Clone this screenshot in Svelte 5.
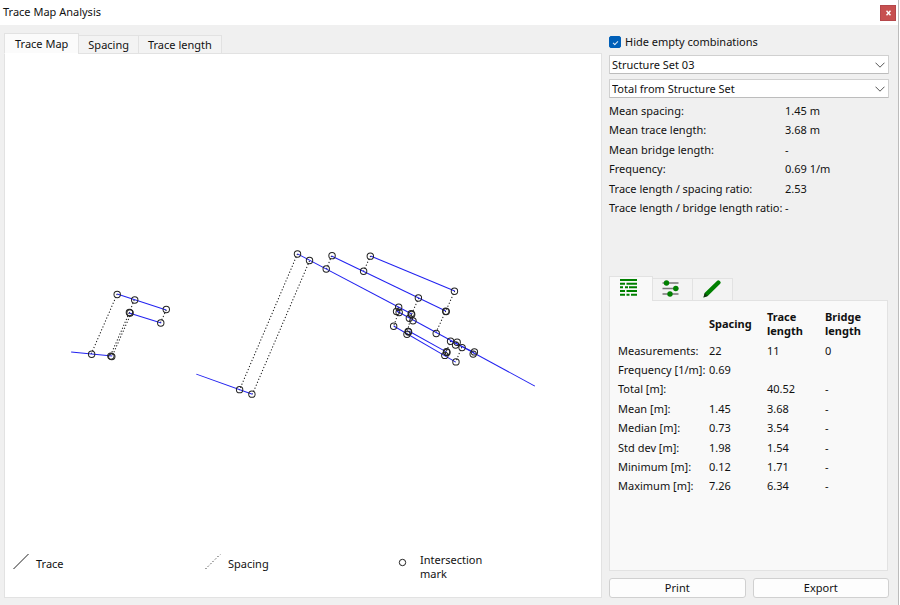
<script>
  const tabs = ['Trace Map', 'Spacing', 'Trace length'];
  let activeTab = $state('Trace Map');
  let activeView = $state('table');
  let hideEmpty = $state(true);
  let structureSet = $state('Structure Set 03');
  let source = $state('Total from Structure Set');

  const summary = [
    ['Mean spacing:', '1.45 m'],
    ['Mean trace length:', '3.68 m'],
    ['Mean bridge length:', '-'],
    ['Frequency:', '0.69 1/m'],
    ['Trace length / spacing ratio:', '2.53'],
    ['Trace length / bridge length ratio:', '-']
  ];

  const stats = [
    ['Measurements:', '22', '11', '0'],
    ['Frequency [1/m]:', '0.69', '', ''],
    ['Total [m]:', '', '40.52', '-'],
    ['Mean [m]:', '1.45', '3.68', '-'],
    ['Median [m]:', '0.73', '3.54', '-'],
    ['Std dev [m]:', '1.98', '1.54', '-'],
    ['Minimum [m]:', '0.12', '1.71', '-'],
    ['Maximum [m]:', '7.26', '6.34', '-']
  ];

  // x1, y1, x2, y2
  const traces = [
    [71, 352, 112, 356],
    [117, 294, 166, 310],
    [129, 313, 161, 323],
    [196, 374, 252, 394],
    [297, 254, 411, 314],
    [331, 256, 445, 311],
    [370, 256, 454, 291],
    [396, 311, 534, 386],
    [393, 326, 455, 362],
    [408, 331, 446, 352],
    [450, 341, 473, 352]
  ];

  const spacings = [
    [117, 294, 91, 354],
    [134, 300, 129, 313],
    [129, 313, 110, 356],
    [131, 313, 112, 356],
    [166, 310, 160, 323],
    [297, 254, 239, 390],
    [309, 261, 252, 394],
    [331, 256, 326, 269],
    [370, 256, 363, 271],
    [454, 291, 445, 311],
    [445, 311, 435, 333],
    [418, 298, 411, 314],
    [411, 314, 406, 334],
    [398, 307, 396, 311],
    [398, 312, 393, 326],
    [450, 341, 444, 355],
    [461, 347, 455, 362],
    [456, 342, 455, 345],
    [473, 352, 472, 354]
  ];

  const marks = [
    [117, 294.5], [134.5, 300], [166, 309.5], [160.5, 323], [129.2, 312.5], [129.9, 313],
    [91.5, 354.2], [110.7, 356], [111.6, 356.5], [297, 254], [309, 260.5], [325.7, 269],
    [331.5, 255.7], [239.2, 389.5], [251.5, 394], [369.7, 256.2], [363, 271.3], [453.7, 291.3],
    [417.7, 298], [445, 311.2], [445.5, 311.6], [393, 326.2], [395.9, 311.4], [398, 307.2],
    [398.5, 312.5], [410.5, 313.7], [411, 314.4], [408.7, 318.2], [412.3, 320.8],
    [407.5, 331.3], [407.9, 332], [406.3, 334.3], [435.5, 333.4], [449.8, 341.2],
    [456.4, 342.1], [454.8, 345], [461.3, 347.5], [473.6, 351.8], [472.4, 354],
    [445.8, 351.6], [446.2, 352.3], [444.1, 355.3], [455.2, 361.8]
  ];
</script>

<div class="window">
  <header class="titlebar">
    <h1>Trace Map Analysis</h1>
    <button class="close" aria-label="Close">
      <svg width="5" height="6" viewBox="0 0 5 6"><path d="M0.5 0.8 4.5 5.2M4.5 0.8 0.5 5.2" stroke="#fff" stroke-width="1.4" /></svg>
    </button>
  </header>

  <div class="body">
    <section class="map">
      <div class="tabs" role="tablist">
        {#each tabs as tab}
          <button
            class="tab"
            class:active={activeTab === tab}
            role="tab"
            aria-selected={activeTab === tab}
            onclick={() => (activeTab = tab)}>{tab}</button>
        {/each}
      </div>
      <div class="canvas">
        <svg class="plot" viewBox="5 55 595 488" role="img" aria-label="Trace map">
          <g class="spacing-lines">
            {#each spacings as [x1, y1, x2, y2]}
              <line {x1} {y1} {x2} {y2} />
            {/each}
          </g>
          <g class="trace-lines">
            {#each traces as [x1, y1, x2, y2]}
              <line {x1} {y1} {x2} {y2} />
            {/each}
          </g>
          <g class="marks">
            {#each marks as [cx, cy]}
              <circle {cx} {cy} r="3.2" />
            {/each}
          </g>
        </svg>
        <ul class="legend">
          <li>
            <svg width="16" height="16" viewBox="0 0 16 16"><path d="M0.5 15 15.5 0" stroke="#222" /></svg>
            <span>Trace</span>
          </li>
          <li>
            <svg width="16" height="16" viewBox="0 0 16 16"><path d="M0.5 15 15.5 0" stroke="#222" stroke-dasharray="1.2 2.2" /></svg>
            <span>Spacing</span>
          </li>
          <li>
            <svg width="16" height="16" viewBox="0 0 16 16"><circle cx="5.5" cy="8.5" r="3.2" fill="none" stroke="#222" /></svg>
            <span>Intersection mark</span>
          </li>
        </ul>
      </div>
    </section>

    <aside class="side">
      <label class="check">
        <input type="checkbox" bind:checked={hideEmpty} />
        <span>Hide empty combinations</span>
      </label>

      <div class="combo">
        <select aria-label="Structure set" bind:value={structureSet}>
          <option>Structure Set 03</option>
        </select>
        <svg width="10" height="6" viewBox="0 0 10 6"><path d="M0.5 0.7 5 5.2 9.5 0.7" /></svg>
      </div>
      <div class="combo">
        <select aria-label="Source" bind:value={source}>
          <option>Total from Structure Set</option>
        </select>
        <svg width="10" height="6" viewBox="0 0 10 6"><path d="M0.5 0.7 5 5.2 9.5 0.7" /></svg>
      </div>

      <dl class="summary">
        {#each summary as [label, value]}
          <dt>{label}</dt>
          <dd>{value}</dd>
        {/each}
      </dl>

      <div class="details">
        <div class="icon-tabs" role="tablist">
          <button class="icon-tab" class:active={activeView === 'table'} role="tab" aria-selected={activeView === 'table'} aria-label="Statistics" onclick={() => (activeView = 'table')}>
            <svg width="17" height="17" viewBox="0 0 17 17" fill="#008000">
              <path d="M0 0h17v2H0zM0 3.7h5v2H0zM6.5 3.7h10.5v2H6.5zM0 7.3h3v2H0zM5 7.3h3v2H5zM9 7.3h8v2H9zM0 11h5v2H0zM6.5 11h10.5v2H6.5zM0 14.7h5v2H0zM6.5 14.7h3v2h-3zM11 14.7h6v2h-6z" />
            </svg>
          </button>
          <button class="icon-tab" class:active={activeView === 'settings'} role="tab" aria-selected={activeView === 'settings'} aria-label="Settings" onclick={() => (activeView = 'settings')}>
            <svg width="17" height="17" viewBox="0 0 17 17">
              <path d="M0.5 3h16M0.5 8.5h16M0.5 14h16" stroke="#777" stroke-width="1.4" />
              <g fill="#008000"><circle cx="4.5" cy="3" r="2.7" /><circle cx="13.8" cy="8.5" r="2.7" /><circle cx="8" cy="14" r="2.7" /></g>
            </svg>
          </button>
          <button class="icon-tab" class:active={activeView === 'edit'} role="tab" aria-selected={activeView === 'edit'} aria-label="Edit" onclick={() => (activeView = 'edit')}>
            <svg width="18" height="18" viewBox="0 0 18 18">
              <path d="M1.8 12.8 14.2 0.7q1.2-1 2.3 0.1l0.7 0.7q1 1.1 0 2.2L5 15.8 0.6 17.4z" fill="#008000" />
              <path d="M1.7 13 5 16 0.4 17.6z" fill="#123512" />
            </svg>
          </button>
        </div>
        <div class="panel">
          <table>
            <thead>
              <tr>
                <td></td>
                <th scope="col">Spacing</th>
                <th scope="col">Trace length</th>
                <th scope="col">Bridge length</th>
              </tr>
            </thead>
            <tbody>
              {#each stats as [label, spacing, trace, bridge]}
                <tr>
                  <th scope="row">{label}</th>
                  <td>{spacing}</td>
                  <td>{trace}</td>
                  <td>{bridge}</td>
                </tr>
              {/each}
            </tbody>
          </table>
        </div>
      </div>

      <div class="actions">
        <button>Print</button>
        <button>Export</button>
      </div>
    </aside>
  </div>
</div>

<style>
  :global(body) {
    margin: 0;
    background: #fff;
  }

  .window {
    box-sizing: border-box;
    display: flex;
    flex-direction: column;
    height: 100vh;
    min-height: 560px;
    margin-right: 1px;
    border-right: 1px solid #bcbcbc;
    background: #f0f0f0;
    color: #111;
    font: 11px/14px 'Noto Sans', 'Open Sans', sans-serif;
  }

  button,
  select {
    font: inherit;
    color: inherit;
  }

  .titlebar {
    display: flex;
    align-items: flex-start;
    justify-content: space-between;
    height: 25px;
    flex-shrink: 0;
    padding: 0 2px 0 3px;
    box-sizing: border-box;
    background: #fff;
  }

  h1 {
    margin: 5px 0 0;
    font-size: 11px;
    font-weight: 400;
  }

  .close {
    display: grid;
    place-items: center;
    width: 16px;
    height: 16px;
    margin-top: 5px;
    padding: 0;
    border: 1px solid #b5474b;
    background: #c75050;
  }

  .body {
    display: flex;
    flex: 1;
    min-height: 0;
    gap: 7px;
    padding: 8px 9px 7px 4px;
  }

  .map {
    display: flex;
    flex: 1;
    flex-direction: column;
    min-width: 0;
  }

  .tabs,
  .icon-tabs {
    position: relative;
    display: flex;
    align-items: flex-end;
    margin-bottom: -1px;
  }

  .tab,
  .icon-tab {
    box-sizing: border-box;
    margin-left: -1px;
    border: 1px solid #e2e2e2;
    background: #f3f3f3;
  }

  .tab {
    height: 19px;
    padding: 0 9px;
    line-height: 16px;
  }

  .tab.active {
    height: 21px;
    margin-left: 0;
    padding: 0 10px;
    border-bottom-color: #fff;
    background: #fbfbfb;
  }

  .canvas {
    display: flex;
    flex: 1;
    flex-direction: column;
    min-height: 0;
    border: 1px solid #e2e2e2;
    background: #fff;
  }

  .plot {
    flex: 1;
    width: 100%;
    min-height: 0;
  }

  .trace-lines {
    stroke: #2222f0;
    stroke-width: 1;
  }

  .spacing-lines {
    stroke: #111;
    stroke-width: 1;
    stroke-dasharray: 1.2 2;
  }

  .marks {
    fill: none;
    stroke: #222;
    stroke-width: 1;
  }

  .legend {
    display: grid;
    grid-template-columns: repeat(3, 1fr);
    margin: 0;
    padding: 9px 12px 16px 8px;
    list-style: none;
  }

  .legend li {
    display: flex;
    align-items: center;
    gap: 7px;
  }

  .legend svg {
    margin-bottom: 10px;
  }

  .legend span {
    max-width: 72px;
    margin-bottom: 6px;
  }

  .legend li:last-child span {
    margin-bottom: 0;
  }

  .side {
    display: flex;
    flex-direction: column;
    width: 280px;
    flex-shrink: 0;
  }

  .check {
    display: flex;
    align-items: center;
    gap: 4px;
    height: 18px;
    margin-bottom: 4px;
  }

  .check input {
    appearance: none;
    display: grid;
    place-items: center;
    width: 12px;
    height: 12px;
    margin: 0;
    border: 1px solid #888;
    border-radius: 2px;
    background: #fff;
  }

  .check input:checked {
    border-color: #005fb8;
    background: #005fb8;
  }

  .check input:checked::before {
    content: '';
    width: 4px;
    height: 2px;
    border: solid #dbe9f6;
    border-width: 0 0 1px 1px;
    transform: rotate(-45deg);
  }

  .combo {
    position: relative;
    margin-bottom: 5px;
  }

  .combo select {
    appearance: none;
    display: block;
    box-sizing: border-box;
    width: 100%;
    height: 19px;
    padding: 0 20px 0 2px;
    border: 1px solid #d0d0d0;
    border-bottom-color: #bcbcbc;
    border-radius: 1px;
    background: #fff;
  }

  .combo svg {
    position: absolute;
    top: 7px;
    right: 4px;
    fill: none;
    stroke: #555;
    pointer-events: none;
  }

  .summary {
    display: grid;
    grid-template-columns: 176px 1fr;
    grid-auto-rows: 1fr;
    align-items: center;
    height: 117px;
    margin: -2px 0 0;
    white-space: nowrap;
  }

  .summary dd {
    margin: 0;
  }

  .details {
    display: flex;
    flex: 1;
    flex-direction: column;
    margin: 58px 1px 7px 0;
  }

  .icon-tab {
    display: grid;
    place-items: center;
    width: 41px;
    height: 23px;
    padding: 0 5px 2px 0;
  }

  .icon-tab:first-child {
    width: 44px;
    margin-left: 0;
  }

  .icon-tab:last-child {
    padding-right: 2px;
  }

  .icon-tab.active {
    height: 25px;
    border-bottom-color: #f9f9f9;
    background: #f9f9f9;
  }

  .panel {
    flex: 1;
    padding: 6px 8px;
    border: 1px solid #e2e2e2;
    background: #f9f9f9;
  }

  table {
    height: 189px;
    border-collapse: collapse;
    table-layout: fixed;
    width: 100%;
  }

  th,
  td {
    padding: 0;
    text-align: left;
    white-space: nowrap;
  }

  thead th {
    width: 58px;
    padding-right: 16px;
    box-sizing: border-box;
    font-weight: 700;
    white-space: normal;
  }

  thead td {
    width: 91px;
  }

  thead tr {
    height: 34px;
  }

  tbody th {
    font-weight: 400;
  }

  .actions {
    display: grid;
    grid-template-columns: 1fr 1fr;
    gap: 7px;
  }

  .actions button {
    height: 20px;
    padding: 0;
    border: 1px solid #d0d0d0;
    border-radius: 3px;
    background: #fdfdfd;
  }
</style>
